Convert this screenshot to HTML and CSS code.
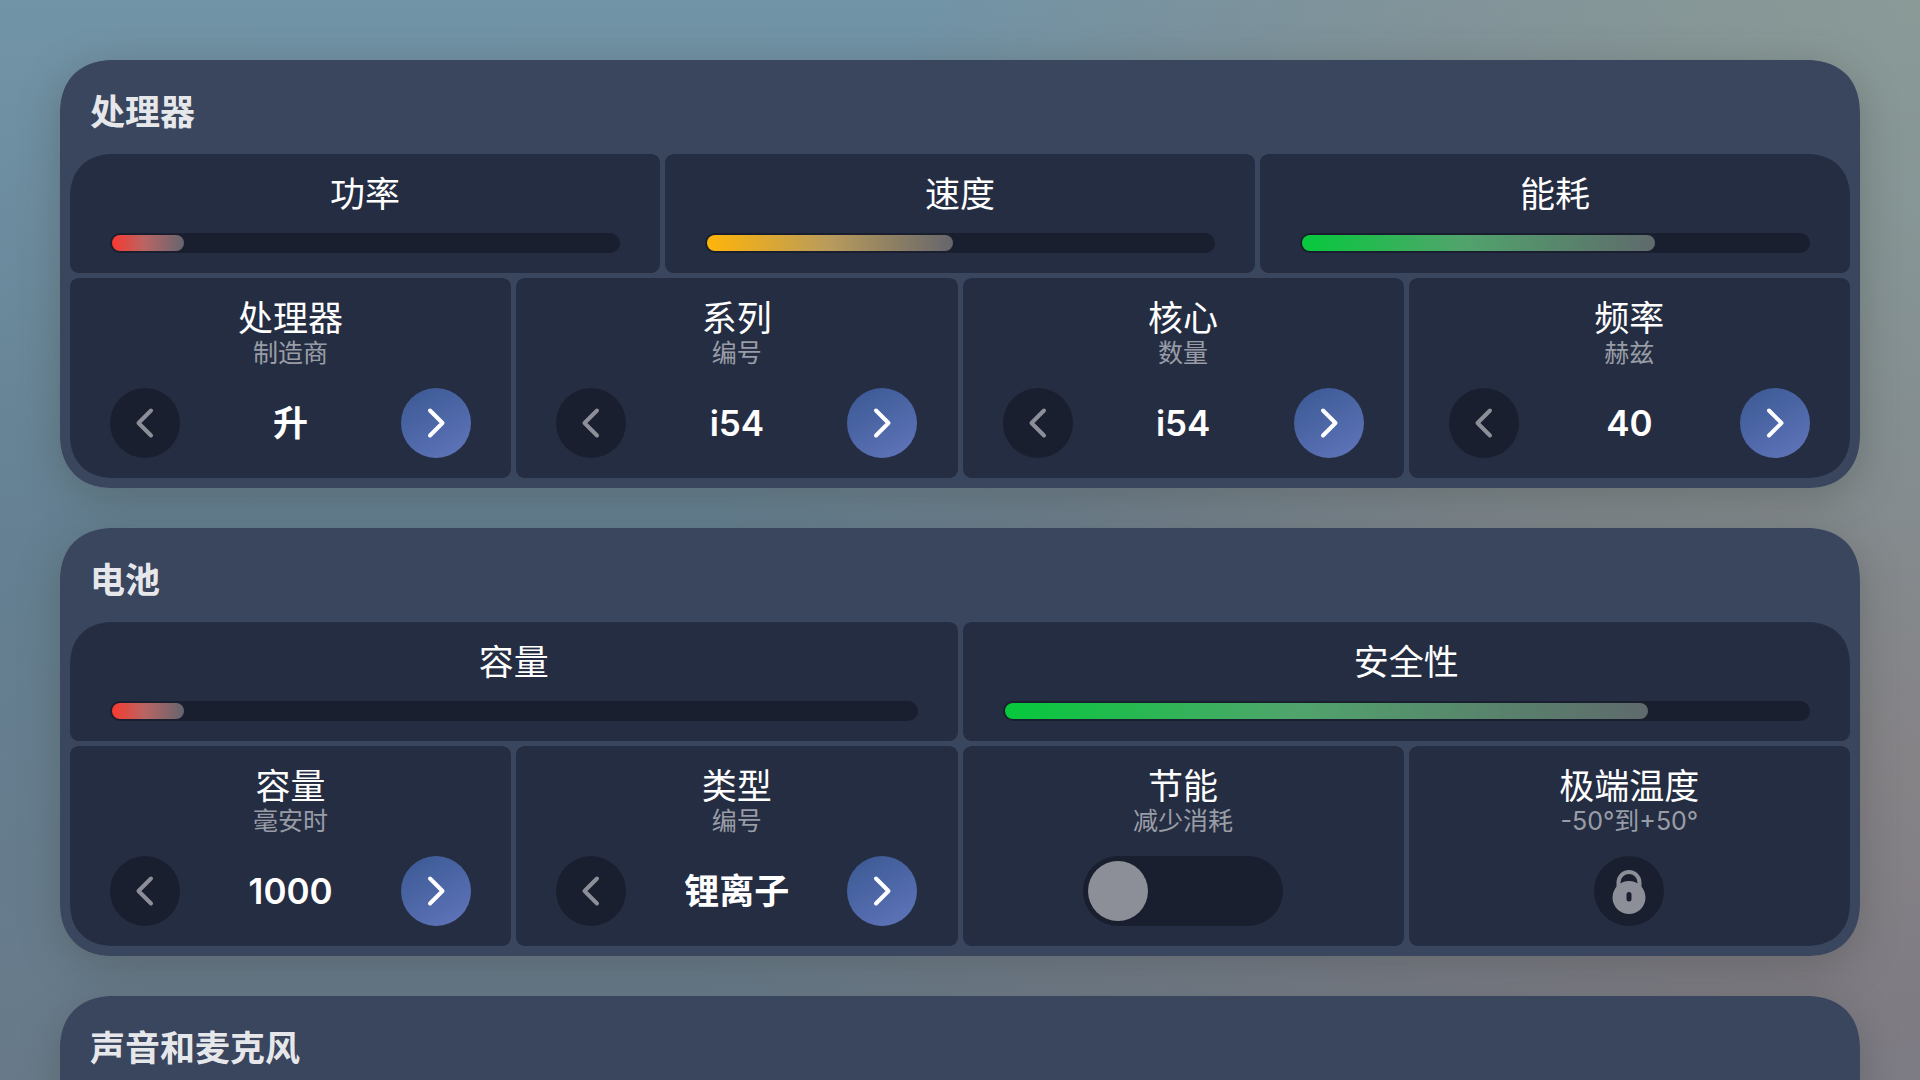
FILE: index.html
```html
<!DOCTYPE html>
<html lang="zh-CN">
<head>
	<meta charset="utf-8">
	<meta name="viewport" content="width=device-width, initial-scale=1">
	<title>处理器</title>
	<link rel="stylesheet" href="styles.css">
</head>
<body>
	<!-- shared icons -->
	<svg class="sprite" aria-hidden="true">
		<symbol id="prev" viewBox="0 0 70 70"><path d="M41 22.500L28.500 35L41 47.500"/></symbol>
		<symbol id="next" viewBox="0 0 70 70"><path d="M29 22.500L41.500 35L29 47.500"/></symbol>
	</svg>

	<main class="screen">
		<section class="panel">
			<h2>处理器</h2>
			<div class="row thirds">
				<div class="card top-left">
					<h3 id="power">功率</h3>
					<div class="meter" role="meter" aria-labelledby="power" aria-valuenow="14"><div class="fill red" style="width: 14.3%"></div></div>
				</div>
				<div class="card">
					<h3 id="speed">速度</h3>
					<div class="meter" role="meter" aria-labelledby="speed" aria-valuenow="49"><div class="fill yellow" style="width: 48.7%"></div></div>
				</div>
				<div class="card top-right">
					<h3 id="usage">能耗</h3>
					<div class="meter" role="meter" aria-labelledby="usage" aria-valuenow="70"><div class="fill green" style="width: 69.8%"></div></div>
				</div>
			</div>
			<div class="row quarters">
				<div class="card bottom-left">
					<h3>处理器</h3>
					<p class="hint">制造商</p>
					<div class="stepper">
						<button class="round" aria-label="上一个" disabled><svg><use href="#prev"/></svg></button>
						<output>升</output>
						<button class="round next" aria-label="下一个"><svg><use href="#next"/></svg></button>
					</div>
				</div>
				<div class="card">
					<h3>系列</h3>
					<p class="hint">编号</p>
					<div class="stepper">
						<button class="round" aria-label="上一个" disabled><svg><use href="#prev"/></svg></button>
						<output>i54</output>
						<button class="round next" aria-label="下一个"><svg><use href="#next"/></svg></button>
					</div>
				</div>
				<div class="card">
					<h3>核心</h3>
					<p class="hint">数量</p>
					<div class="stepper">
						<button class="round" aria-label="上一个" disabled><svg><use href="#prev"/></svg></button>
						<output>i54</output>
						<button class="round next" aria-label="下一个"><svg><use href="#next"/></svg></button>
					</div>
				</div>
				<div class="card bottom-right">
					<h3>频率</h3>
					<p class="hint">赫兹</p>
					<div class="stepper">
						<button class="round" aria-label="上一个" disabled><svg><use href="#prev"/></svg></button>
						<output>40</output>
						<button class="round next" aria-label="下一个"><svg><use href="#next"/></svg></button>
					</div>
				</div>
			</div>
		</section>

		<section class="panel">
			<h2>电池</h2>
			<div class="row halves">
				<div class="card top-left">
					<h3 id="capacity">容量</h3>
					<div class="meter" role="meter" aria-labelledby="capacity" aria-valuenow="9"><div class="fill red" style="width: 9%"></div></div>
				</div>
				<div class="card top-right">
					<h3 id="safety">安全性</h3>
					<div class="meter" role="meter" aria-labelledby="safety" aria-valuenow="80"><div class="fill green" style="width: 80.1%"></div></div>
				</div>
			</div>
			<div class="row quarters">
				<div class="card bottom-left">
					<h3>容量</h3>
					<p class="hint">毫安时</p>
					<div class="stepper">
						<button class="round" aria-label="上一个" disabled><svg><use href="#prev"/></svg></button>
						<output>1000</output>
						<button class="round next" aria-label="下一个"><svg><use href="#next"/></svg></button>
					</div>
				</div>
				<div class="card">
					<h3>类型</h3>
					<p class="hint">编号</p>
					<div class="stepper">
						<button class="round" aria-label="上一个" disabled><svg><use href="#prev"/></svg></button>
						<output>锂离子</output>
						<button class="round next" aria-label="下一个"><svg><use href="#next"/></svg></button>
					</div>
				</div>
				<div class="card">
					<h3><label for="saving">节能</label></h3>
					<p class="hint">减少消耗</p>
					<div class="stepper single">
						<input type="checkbox" role="switch" class="switch" id="saving">
					</div>
				</div>
				<div class="card bottom-right">
					<h3>极端温度</h3>
					<p class="hint">-50°到+50°</p>
					<div class="stepper single">
						<button class="round" aria-label="极端温度已锁定" disabled>
							<svg class="lock" viewBox="0 0 70 70">
								<path class="shackle" d="M24.500 33V26.500A10.500 10.500 0 0 1 45.500 26.500V33"/>
								<path fill-rule="evenodd" d="M35 25A16.500 16.500 0 1 1 35 58A16.500 16.500 0 1 1 35 25ZM35 36Q32.500 36 32.500 38.500V43Q32.500 45.500 35 45.500Q37.500 45.500 37.500 43V38.500Q37.500 36 35 36Z"/>
							</svg>
						</button>
					</div>
				</div>
			</div>
		</section>

		<section class="panel">
			<h2>声音和麦克风</h2>
			<div class="row halves">
				<div class="card top-left bottom-left"></div>
				<div class="card top-right bottom-right"></div>
			</div>
		</section>
	</main>
</body>
</html>
```

FILE: styles.css
```css
* {
	box-sizing: border-box;
}
body {
	margin: 0;
	font-family: Inter, "Noto Sans CJK SC", sans-serif;
	color: #fff;
}
h2, h3, p {
	margin: 0;
}
.sprite {
	display: none;
}
.screen {
	display: flex;
	flex-direction: column;
	gap: 40px;
	height: 100vh;
	padding: 60px;
	overflow-y: auto;
	scrollbar-width: none;
	background:
		radial-gradient(circle at 100% 0%, #8a9a97 0%, transparent 45%),
		radial-gradient(circle at 100% 70%, #857c82 0%, transparent 60%),
		linear-gradient(#7294a7, #648092 50%, #687a8a);
}
.panel {
	flex: none;
	padding: 0 10px 10px;
	border-radius: 54px;
	corner-shape: superellipse(1.2);
	background: #3a465e;
	box-shadow: 0 10px 40px rgba(70, 75, 70, 0.4);
}
.panel h2 {
	padding: 32px 20px 22px;
	font-size: 35px;
	font-weight: 700;
	line-height: 40px;
	color: rgba(255, 255, 255, 0.9);
}
.row {
	display: grid;
	gap: 5px;
}
.row + .row {
	margin-top: 5px;
}
.halves {
	grid-template-columns: repeat(2, 1fr);
}
.thirds {
	grid-template-columns: repeat(3, 1fr);
}
.quarters {
	grid-template-columns: repeat(4, 1fr);
}
.card {
	min-height: 119px;
	padding: 21px 40px 20px;
	border-radius: 10px;
	background: #252d42;
	text-align: center;
	corner-shape: superellipse(1.2);
}
.top-left {
	border-top-left-radius: 44px;
}
.top-right {
	border-top-right-radius: 44px;
}
.bottom-left {
	border-bottom-left-radius: 44px;
}
.bottom-right {
	border-bottom-right-radius: 44px;
}
.card h3 {
	font-size: 35px;
	font-weight: 400;
	line-height: 39px;
}
.hint {
	font-size: 25px;
	line-height: 30px;
	color: rgba(255, 255, 255, 0.55);
}

/* meters */
.meter {
	height: 20px;
	margin-top: 19px;
	padding: 2px;
	border-radius: 10px;
	background: #1a1f2f;
}
.fill {
	height: 16px;
	border-radius: 8px;
}
.red {
	background: linear-gradient(90deg, #f8392f, #b96563 45%, #65656f);
}
.yellow {
	background: linear-gradient(90deg, #ffb509, #b89b5c 50%, #65656b);
}
.green {
	background: linear-gradient(90deg, #06c93c, #50a46c 45%, #5f6a6c);
}

/* controls */
.stepper {
	display: flex;
	align-items: center;
	justify-content: space-between;
	margin-top: 20px;
}
.single {
	justify-content: center;
}
.stepper output {
	font-size: 35px;
	font-weight: 600;
	line-height: 40px;
}
.round {
	width: 70px;
	height: 70px;
	padding: 0;
	border: none;
	border-radius: 50%;
	background: #1a1f2f;
	color: #8c8f97;
}
.round svg {
	display: block;
	width: 70px;
	height: 70px;
	fill: none;
	stroke: currentColor;
	stroke-width: 4;
	stroke-linecap: round;
	stroke-linejoin: round;
}
.round.next {
	background: linear-gradient(150deg, #3a5892, #6176bc);
	color: #fff;
	cursor: pointer;
}
.round .lock {
	fill: currentColor;
	stroke: none;
}
.lock .shackle {
	fill: none;
	stroke: currentColor;
}
.switch {
	appearance: none;
	width: 200px;
	height: 70px;
	margin: 0;
	padding: 5px;
	border-radius: 35px;
	background: #1a1f2f;
	cursor: pointer;
}
.switch::before {
	content: "";
	display: block;
	width: 60px;
	height: 60px;
	border-radius: 50%;
	background: #8c8f97;
}
.switch:checked::before {
	margin-left: auto;
}
```
